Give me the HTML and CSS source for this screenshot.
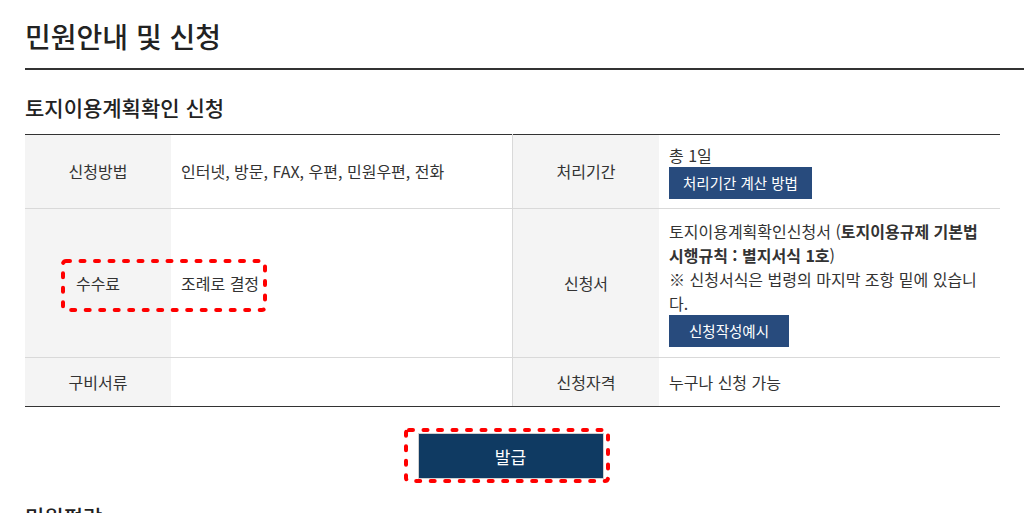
FILE: index.html
```html
<!DOCTYPE html>
<html lang="ko">
<head>
<meta charset="UTF-8">
<title>민원안내 및 신청</title>
<link rel="stylesheet" href="styles.css">
</head>
<body>

<div class="page">

<h1 class="title">민원안내 및 신청</h1>

<h3 class="subtitle">토지이용계획확인 신청</h3>

<div class="table-wrap">
<table class="info">
  <tr class="r1">
    <th>신청방법</th>
    <td>인터넷, 방문, FAX, 우편, 민원우편, 전화</td>
    <th class="sep">처리기간</th>
    <td>
      <div>총 1일</div>
      <a class="btn">처리기간 계산 방법</a>
    </td>
  </tr>
  <tr class="r2">
    <th>수수료</th>
    <td>조례로 결정</td>
    <th class="sep">신청서</th>
    <td>
      <div>토지이용계획확인신청서 (<b>토지이용규제 기본법 시행규칙 : 별지서식 1호</b>)</div>
      <div>※ 신청서식은 법령의 마지막 조항 밑에 있습니다.</div>
      <a class="btn btn-wide">신청작성예시</a>
    </td>
  </tr>
  <tr class="r3">
    <th>구비서류</th>
    <td></td>
    <th class="sep">신청자격</th>
    <td>누구나 신청 가능</td>
  </tr>
</table>

<!-- 표시용 점선 -->
<svg class="mark mark-fee" width="206" height="53" viewBox="0 0 206 53">
  <rect x="2" y="2" width="202" height="49" rx="3" fill="none" stroke="#ff0000" stroke-width="4" stroke-linecap="round" stroke-dasharray="4 10.5"/>
</svg>
</div>

<div class="issue">
  <div class="issue-box">
    <button class="issue-btn">발급</button>
    <svg class="mark mark-issue" width="206" height="55" viewBox="0 0 206 55">
      <rect x="2" y="2" width="202" height="51" rx="3" fill="none" stroke="#ff0000" stroke-width="4" stroke-linecap="round" stroke-dasharray="4 10.5"/>
    </svg>
  </div>
</div>

<h3 class="subtitle next">민원편람</h3>

</div>

</body>
</html>
```

FILE: styles.css
```css
body{
  margin:0;
  font-family:"Noto Sans CJK KR","Noto Sans",sans-serif;
  font-size:16px;
  color:#333;
  background:#fff;
  overflow:hidden;
}

.page{
  padding-left:25px;
}

.title{
  margin:0;
  padding:17px 0 12px;
  font-size:28px;
  line-height:39px;
  font-weight:500;
  color:#222;
  border-bottom:2px solid #333;
}

.subtitle{
  margin:23px 0 13px;
  font-size:21px;
  line-height:28px;
  font-weight:500;
  color:#222;
}

.table-wrap{
  position:relative;
  width:975px;
}

.info{
  width:100%;
  border-collapse:collapse;
  table-layout:fixed;
  border-top:1px solid #333;
}

.info th,.info td{
  height:32px;
  padding:8px 10px;
  line-height:24px;
  border-bottom:1px solid #d9d9d9;
  vertical-align:middle;
}

.info .r1 td,.info .r1 th{
  padding:8px 10px 9px;
}

.info .r2 td,.info .r2 th{
  padding:10px 10px;
}

.info .r3 td,.info .r3 th{
  border-bottom:1px solid #333;
}

.info th{
  width:126px;
  background:#f4f4f4;
  font-weight:400;
  text-align:center;
}

.info td{
  width:321px;
  text-align:left;
}

.info th.sep{
  border-left:1px solid #d9d9d9;
}

.info td b{
  font-weight:700;
  color:#333;
}

.btn{
  display:inline-block;
  height:32px;
  line-height:32px;
  padding:0 14px;
  background:#284b7d;
  color:#fff;
  font-size:14.5px;
  vertical-align:top;
}

.btn-wide{
  padding:0 20px;
}

.mark{
  position:absolute;
  pointer-events:none;
}

.mark-fee{
  left:36px;
  top:125px;
}

.issue{
  width:975px;
  margin-top:26px;
  display:flex;
  justify-content:center;
}

.issue-box{
  position:relative;
  margin-right:4px;
}

.issue-btn{
  display:block;
  width:186px;
  height:46px;
  border:1px solid #d0d0d0;
  background:#0f3a62;
  color:#fff;
  font-family:inherit;
  font-size:17px;
}

.mark-issue{
  left:-14px;
  top:-5px;
}

.subtitle.next{
  margin-top:23px;
}
```
